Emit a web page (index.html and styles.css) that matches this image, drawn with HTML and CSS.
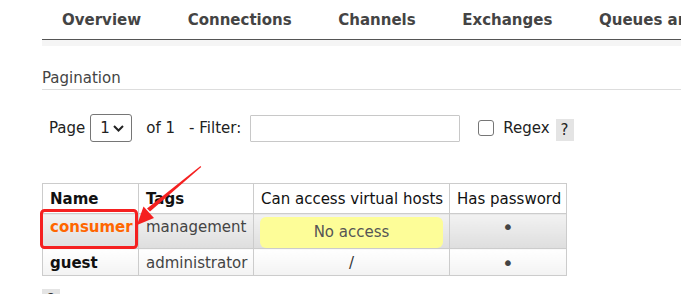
FILE: index.html
```html
<!DOCTYPE html>
<html lang="en">
<head>
  <meta charset="UTF-8">
  <title>Admin - Users</title>
  <link rel="stylesheet" href="styles.css">
</head>
<body>
  <div class="menu">
    <ul class="tabs">
      <li>Overview</li>
      <li>Connections</li>
      <li>Channels</li>
      <li>Exchanges</li>
      <li>Queues and Streams</li>
      <li>Admin</li>
    </ul>
  </div>
  <div class="menu-shade"></div>

  <main class="main">
    <h3 class="section-title">Pagination</h3>
    <div class="filter-row">
      <span class="page-label">Page</span>
      <span class="select-wrap">
        <select class="page-select"><option>1</option></select>
        <svg class="chevron" width="11" height="7" viewBox="0 0 11 7"><path d="M1 1l4.5 4.5L10 1" fill="none" stroke="#222" stroke-width="2"/></svg>
      </span>
      <span class="page-of">of 1</span>
      <span class="filter-label">- Filter:</span>
      <input type="text" class="filter-input">
      <input type="checkbox" class="regex-check">
      <span class="regex-label">Regex</span>
      <span class="help">?</span>
    </div>

    <table class="users">
      <colgroup>
        <col class="col-name">
        <col class="col-tags">
        <col class="col-vhosts">
        <col class="col-pass">
      </colgroup>
      <thead>
        <tr>
          <th class="strong">Name</th>
          <th class="strong">Tags</th>
          <th>Can access virtual hosts</th>
          <th>Has password</th>
        </tr>
      </thead>
      <tbody>
        <tr class="row-alt">
          <td><span class="user-link">consumer</span></td>
          <td class="tags">management</td>
          <td class="vhost-cell"><div class="no-access">No access</div></td>
          <td class="center"><span class="dot">&bull;</span></td>
        </tr>
        <tr class="row-plain">
          <td><span class="user-name">guest</span></td>
          <td class="tags">administrator</td>
          <td class="center">/</td>
          <td class="center"><span class="dot">&bull;</span></td>
        </tr>
      </tbody>
    </table>

    <span class="help help-bottom">?</span>
  </main>

  <!-- screenshot markup: red box + arrow -->
  <svg class="annotation" width="681" height="294" viewBox="0 0 681 294">
    <rect x="41.5" y="210.5" width="95" height="37" rx="3" fill="none" stroke="#f52020" stroke-width="3"/>
    <polygon points="200.5,166 201.2,167 150,211.5 147,208.5" fill="#f52020"/>
    <polygon points="137,225 143.5,206.5 154,218" fill="#f52020"/>
  </svg>
</body>
</html>
```

FILE: styles.css
```css
html, body {
  margin: 0;
  padding: 0;
  overflow: hidden;
}
body {
  font-family: 'DejaVu Sans', Verdana, sans-serif;
  font-size: 15px;
  line-height: 18px;
  color: #222;
  background: #fff;
  position: relative;
  width: 681px;
  height: 294px;
}
.menu {
  margin-left: 42px;
  border-bottom: 1px solid #555;
}
.tabs {
  list-style: none;
  margin: 0;
  padding: 11px 0 10px 20px;
  display: flex;
  gap: 46.6px;
  white-space: nowrap;
}
.tabs li {
  font-weight: 700;
  color: #444;
}
.menu-shade {
  margin-left: 42px;
  height: 6px;
  background: #f5f5f5;
}
.main {
  padding-left: 42px;
}
.section-title {
  margin: 23px 0 0 0;
  padding-bottom: 2px;
  font-size: 15px;
  font-weight: 400;
  color: #444;
  border-bottom: 1px solid #ddd;
}
.filter-row {
  margin-top: 24px;
  height: 28px;
  display: flex;
  align-items: center;
  white-space: nowrap;
}
.page-label {
  margin-left: 7px;
}
.select-wrap {
  position: relative;
  margin-left: 5px;
  display: inline-flex;
}
.page-select {
  appearance: none;
  -webkit-appearance: none;
  width: 42px;
  height: 28px;
  margin: 0;
  padding: 0 0 0 9px;
  border: 1px solid #767676;
  border-radius: 3px;
  background: #fff;
  font-family: inherit;
  font-size: 15px;
  color: #222;
}
.chevron {
  position: absolute;
  right: 8px;
  top: 11px;
  pointer-events: none;
}
.page-of {
  margin-left: 14px;
}
.filter-label {
  margin-left: 14px;
}
.filter-input {
  margin: 0 0 0 9px;
  width: 210px;
  height: 27px;
  box-sizing: border-box;
  border: 1px solid #c8c8c8;
  border-radius: 1px;
  padding: 0 4px;
}
.regex-check {
  appearance: none;
  -webkit-appearance: none;
  margin: 0 0 0 18px;
  width: 16px;
  height: 16px;
  border: 1px solid #767676;
  border-radius: 3px;
  background: #fff;
}
.regex-label {
  margin-left: 9px;
}
.help {
  display: inline-block;
  width: 18px;
  height: 22px;
  line-height: 22px;
  text-align: center;
  background: #e4e4e4;
  color: #222;
}
.filter-row .help {
  margin: 4px 0 0 6px;
}
.users {
  margin-top: 41px;
  border-collapse: collapse;
  table-layout: fixed;
  width: 525px;
}
.col-name { width: 96px; }
.col-tags { width: 115px; }
.col-vhosts { width: 196px; }
.col-pass { width: 117px; }
.users th,
.users td {
  border: 1px solid #ccc;
  white-space: nowrap;
  overflow: hidden;
}
.users th {
  padding: 6px 7px 5px 7px;
  text-align: left;
  font-weight: 400;
  color: #111;
  background: #fff;
}
.users th.strong {
  font-weight: 700;
}
.users td {
  padding: 4px 7px 2px 7px;
  vertical-align: top;
}
.users .row-plain td {
  padding: 5px 7px 1px 7px;
}
.row-alt td {
  background: linear-gradient(#f2f2f2, #dedede);
}
.row-plain td {
  background: linear-gradient(#fff, #f3f3f3);
}
.user-link {
  color: #f60;
  font-weight: 700;
}
.user-name {
  font-weight: 700;
  color: #111;
}
.tags {
  color: #444;
}
.center {
  text-align: center;
  color: #333;
}
.dot {
  font-size: 20px;
  color: #444;
}
.users td.vhost-cell {
  padding: 3px 6px 0 6px;
}
.no-access {
  height: 31px;
  line-height: 31px;
  border-radius: 6px;
  background: #fdfd98;
  color: #555;
  text-align: center;
}
.help-bottom {
  margin-top: 13px;
  color: #333;
}
.annotation {
  position: absolute;
  left: 0;
  top: 0;
  pointer-events: none;
}
```
